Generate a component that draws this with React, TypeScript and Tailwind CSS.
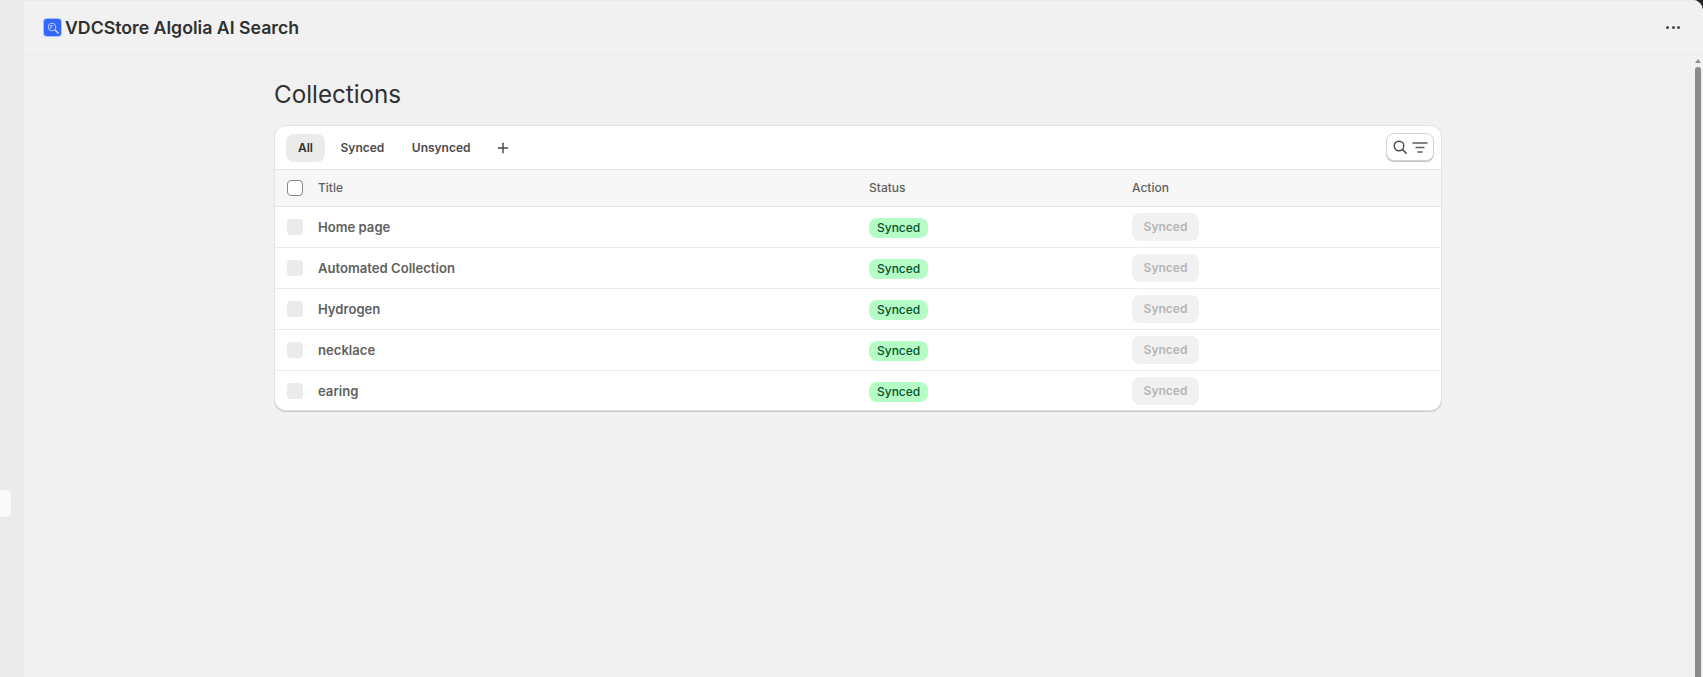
import { Plus } from "lucide-react";

const ROWS = ["Home page", "Automated Collection", "Hydrogen", "necklace", "earing"];
const TABS = ["All", "Synced", "Unsynced"];

const AppIcon = () => (
  <span className="flex h-[17px] w-[17px] shrink-0 items-center justify-center rounded-[3px] bg-[#3366ff] shadow-[0_0_0_1px_#a9c0ff]">
    <svg width="14" height="14" viewBox="0 0 14 14" fill="none">
      <circle cx="6" cy="6" r="3.8" stroke="#b9ccff" strokeWidth="1" />
      <path d="M9 9L12.5 12.5" stroke="#e6edff" strokeWidth="1.2" />
      <path d="M4.6 7.6V4.6h2.6M4.6 6.1h1.8" stroke="#b9ccff" strokeWidth="0.8" />
    </svg>
  </span>
);

const SearchFilter = () => (
  <button className="mb-[1px] flex h-[28px] w-[48px] items-center justify-center gap-[5px] rounded-lg border border-[#d4d4d4] bg-white shadow-[0_1px_0_#c4c4c4]">
    <svg width="14" height="14" viewBox="0 0 14 14" fill="none">
      <circle cx="6" cy="6" r="4.8" stroke="#4a4a4a" strokeWidth="1.4" />
      <path d="M9.6 9.6L13.2 13.2" stroke="#4a4a4a" strokeWidth="1.5" strokeLinecap="round" />
    </svg>
    <svg width="16" height="11" viewBox="0 0 16 11" fill="none">
      <path d="M0.5 1h15M3.5 5.5h9M5.5 10h5" stroke="#5c5c5c" strokeWidth="1.7" />
    </svg>
  </button>
);

const GridRow = ({ className, children }: { className: string; children: React.ReactNode }) => (
  <div className={`grid grid-cols-[43px_551px_263px_1fr] items-center ${className}`}>{children}</div>
);

export default function App() {
  return (
    <div className="h-[677px] overflow-hidden bg-[#222222]">
      <div
        className="relative flex h-[677px] overflow-hidden rounded-tr-[10px] bg-[#f1f1f1] text-[#303030]"
        style={{ fontFamily: "Inter, 'Noto Sans', sans-serif" }}
      >
        <aside className="w-[24px] shrink-0 border-r border-[#e8e8e8] bg-[#ebebeb]" />
        <span className="absolute top-[490px] left-0 h-[27px] w-[11px] rounded-r-[5px] bg-[#fafafa]" />

        <div className="flex min-w-0 flex-1 flex-col">
          <header className="flex h-[55px] shrink-0 items-center justify-between border-t border-b border-t-[#ebebeb] border-b-[#ebebeb] pr-[23px] pl-[20px]">
            <div className="flex items-center gap-[4px]">
              <AppIcon />
              <h1 className="text-[17.7px] leading-6 font-semibold text-[#303030]">VDCStore Algolia AI Search</h1>
            </div>
            <div className="flex gap-[2.5px]">
              <span className="h-[3px] w-[3px] rounded-full bg-[#4a4a4a]" />
              <span className="h-[3px] w-[3px] rounded-full bg-[#4a4a4a]" />
              <span className="h-[3px] w-[3px] rounded-full bg-[#4a4a4a]" />
            </div>
          </header>

          <div className="flex min-h-0 flex-1">
            <main className="min-w-0 flex-1 pt-[24px] pl-[250px]">
              <h2 className="mb-[14px] text-[24.2px] leading-8 font-normal text-[#303030]">Collections</h2>

              <section className="w-[1168px] overflow-hidden rounded-xl border border-[#e3e3e3] bg-white shadow-[0_1px_0_#c9c9c9]">
                <div className="flex h-[44px] items-center justify-between border-b border-[#e3e3e3] pr-[7px] pl-[11px]">
                  <div className="flex items-center gap-[3.5px]">
                    {TABS.map((tab, i) => (
                      <button
                        key={tab}
                        className={`h-7 rounded-lg px-3 text-xs font-semibold ${
                          i === 0 ? "bg-[#ebebeb] text-[#303030]" : "text-[#4a4a4a]"
                        }`}
                      >
                        {tab}
                      </button>
                    ))}
                    <Plus className="ml-[9px] h-4 w-4 text-[#4a4a4a]" strokeWidth={2.2} />
                  </div>
                  <SearchFilter />
                </div>

                <GridRow className="h-[37px] border-b border-[#e3e3e3] bg-[#f7f7f7] text-xs font-medium text-[#616161]">
                  <span className="ml-3 h-4 w-4 rounded-[4px] border border-[#8a8a8a] bg-white" />
                  <span>Title</span>
                  <span>Status</span>
                  <span>Action</span>
                </GridRow>

                {ROWS.map((title, i) => (
                  <GridRow
                    key={title}
                    className={i < ROWS.length - 1 ? "h-[41px] border-b border-[#ebebeb]" : "h-[39px]"}
                  >
                    <span className="ml-3 h-4 w-4 rounded-[4px] bg-[#ebebeb]" />
                    <span className="pt-[2px] text-[13.1px] font-semibold text-[#616161]">{title}</span>
                    <span className="mt-[2px] w-fit rounded-lg bg-[#b4fec5] px-2 py-[2px] text-xs leading-4 font-medium text-[#0c5132]">
                      Synced
                    </span>
                    <button className="h-7 w-[67px] rounded-lg bg-[#f1f1f1] text-xs font-semibold text-[#b5b5b5]">
                      Synced
                    </button>
                  </GridRow>
                ))}
              </section>
            </main>

            <div className="flex w-[10px] shrink-0 flex-col items-center pt-[4px]">
              <span className="mb-[4px] h-0 w-0 border-x-[3px] border-b-[4px] border-x-transparent border-b-[#8a8a8a]" />
              <span className="h-[610px] w-[6px] rounded-t-[3px] bg-[#8a8a8a]" />
            </div>
          </div>
        </div>
      </div>
    </div>
  );
}
